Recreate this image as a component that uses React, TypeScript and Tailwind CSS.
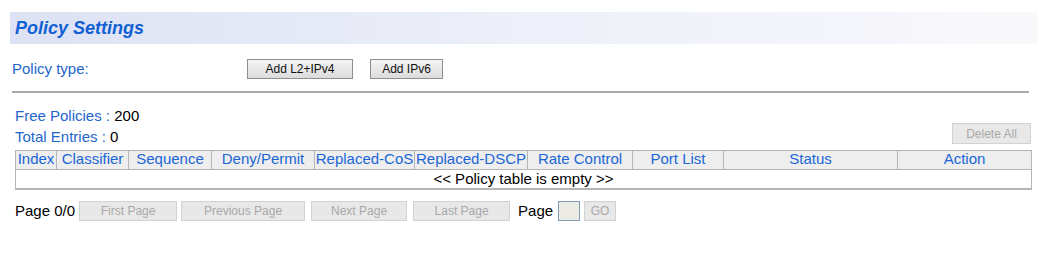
import React from "react";

const columns: { label: string; width: string }[] = [
  { label: "Index", width: "w-[41px]" },
  { label: "Classifier", width: "w-[72px]" },
  { label: "Sequence", width: "w-[83px]" },
  { label: "Deny/Permit", width: "w-[103px]" },
  { label: "Replaced-CoS", width: "w-[100px]" },
  { label: "Replaced-DSCP", width: "w-[113px]" },
  { label: "Rate Control", width: "w-[105px]" },
  { label: "Port List", width: "w-[91px]" },
  { label: "Status", width: "w-[174px]" },
  { label: "Action", width: "w-[133px]" },
];

const pageButtons: { label: string; className: string }[] = [
  { label: "First Page", className: "ml-[4px] w-[98px]" },
  { label: "Previous Page", className: "ml-[4px] w-[124px]" },
  { label: "Next Page", className: "ml-[6px] w-[96px]" },
  { label: "Last Page", className: "ml-[6px] w-[97px]" },
];

function DisabledButton({ label, className }: { label: string; className: string }) {
  return (
    <button
      type="button"
      disabled
      className={`h-[20px] border border-[#d2d2d2] bg-[#e8e8e8] text-[12px] leading-[18px] text-[#a9a9a9] text-center ${className}`}
    >
      {label}
    </button>
  );
}

function AddButton({ label, className }: { label: string; className: string }) {
  return (
    <button
      type="button"
      className={`h-[20px] border border-[#8f8f8f] bg-gradient-to-b from-[#f4f4f4] to-[#dcdcdc] text-[12px] leading-[18px] text-[#111] text-center ${className}`}
    >
      {label}
    </button>
  );
}

export default function App() {
  return (
    <div className="w-[1038px] h-[258px] bg-white overflow-hidden font-['Liberation_Sans',Arial,sans-serif] flex flex-col">
      {/* title */}
      <div className="mt-[12px] ml-[10px] h-[32px] flex items-center pl-[5px] bg-gradient-to-r from-[#dde2f4] via-[#edf0f9] to-[#f9f9fc]">
        <h1 className="text-[18px] font-bold italic text-[#1060d4] leading-none">Policy Settings</h1>
      </div>

      {/* policy type */}
      <div className="mt-[15px] ml-[12px] h-[20px] flex items-center">
        <span className="w-[235px] text-[15px] text-[#2266cc]">Policy type:</span>
        <AddButton label="Add L2+IPv4" className="w-[106px]" />
        <AddButton label="Add IPv6" className="ml-[17px] w-[73px]" />
      </div>

      <div className="mt-[12px] ml-[12px] w-[1017px] border-t-2 border-[#a9a9a9]" />

      {/* counts */}
      <div className="mt-[12px] ml-[15px] w-[1017px] flex justify-between">
        <div className="flex flex-col text-[15px] leading-[21px]">
          <span>
            <span className="text-[#2266cc]">Free Policies : </span>
            <span className="text-black">200</span>
          </span>
          <span>
            <span className="text-[#2266cc]">Total Entries : </span>
            <span className="text-black">0</span>
          </span>
        </div>
        <DisabledButton label="Delete All" className="self-end mb-[3px] h-[21px] w-[79px] mr-[1px]" />
      </div>

      {/* table */}
      <div className="mt-[3px] ml-[15px] w-[1017px]">
        <div className="flex h-[20px] border border-[#b5b5b5] bg-[#eeeeee]">
          {columns.map((c, i) => (
            <div
              key={c.label}
              className={`${c.width} shrink-0 text-center text-[15px] leading-[16px] text-[#1a66d6] whitespace-nowrap overflow-visible ${i < columns.length - 1 ? "border-r border-[#b5b5b5]" : ""}`}
            >
              {c.label}
            </div>
          ))}
        </div>
        <div className="h-[20px] border-x border-b-2 border-[#b5b5b5] text-center text-[15px] leading-[18px] text-black">
          &lt;&lt; Policy table is empty &gt;&gt;
        </div>
      </div>

      {/* paging */}
      <div className="mt-[11px] ml-[15px] h-[20px] flex items-center">
        <span className="text-[15px] text-black">Page 0/0</span>
        {pageButtons.map((b) => (
          <DisabledButton key={b.label} label={b.label} className={b.className} />
        ))}
        <span className="ml-[8px] text-[15px] text-black">Page</span>
        <input
          type="text"
          className="ml-[5px] w-[22px] h-[20px] border border-[#7f9db9] bg-[#ecebe4]"
        />
        <DisabledButton label="GO" className="ml-[4px] w-[32px]" />
      </div>
    </div>
  );
}
